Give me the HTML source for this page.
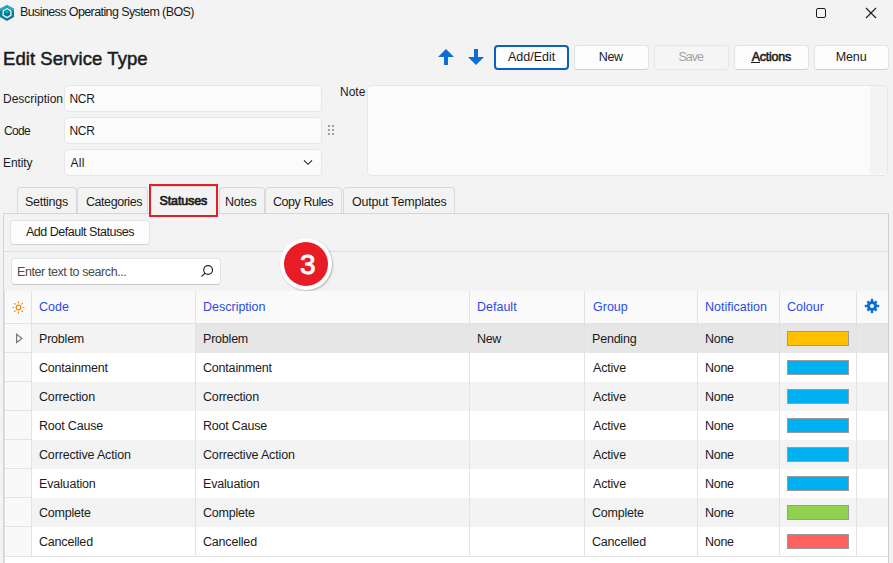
<!DOCTYPE html>
<html><head><meta charset="utf-8"><style>
html,body{margin:0;padding:0;}
body{width:893px;height:563px;overflow:hidden;position:relative;background:#f3f3f3;font-family:"Liberation Sans", sans-serif;}
.t{position:absolute;white-space:nowrap;line-height:1;}
</style></head><body>
<svg style="position:absolute;left:0px;top:4px" width="15" height="18" viewBox="0 0 15 18">
<polygon points="7,0.9 14,4.8 14,12.9 7,16.9 0,12.9 0,4.8" fill="#0b7c98"/>
<polygon points="7,0.9 14,4.8 14,7 7,3.2 0,7 0,4.8" fill="#19b3c3"/>
<polygon points="7,4.6 10.9,6.9 10.9,11.3 7,13.5 3.1,11.3 3.1,6.9" fill="none" stroke="#ffffff" stroke-width="1.2"/>
<polygon points="7,6.6 9.4,8 9.4,10.6 7,12 4.6,10.6 4.6,8" fill="#0a6f8a"/>
<polygon points="7,6.6 9.4,8 7,9.3 4.6,8" fill="#19b3c3"/>
</svg>
<div class="t" style="left:20.00px;top:6px;font-size:12.5px;color:#1a1a1a;font-weight:normal;letter-spacing:-0.600px;">Business Operating System (BOS)</div>
<div style="position:absolute;left:816px;top:8px;width:10px;height:10px;box-sizing:border-box;border:1.2px solid #1c1c1c;border-radius:2px"></div>
<svg style="position:absolute;left:865px;top:7px" width="12" height="12" viewBox="0 0 12 12">
<path d="M1 1 L11 11 M11 1 L1 11" stroke="#1c1c1c" stroke-width="1.1"/></svg>
<div class="t" style="left:3.00px;top:50px;font-size:18.5px;color:#1b1b1b;font-weight:normal;letter-spacing:0.062px;-webkit-text-stroke:0.5px #1b1b1b">Edit Service Type</div>
<svg style="position:absolute;left:438px;top:49px" width="16" height="16" viewBox="0 0 16 16">
<path d="M8 0 L16 8 L10 8 L10 16 L6 16 L6 8 L0 8 Z" fill="#0b6ed4"/></svg>
<svg style="position:absolute;left:468px;top:49px" width="16" height="16" viewBox="0 0 16 16">
<path d="M8 16 L16 8 L10 8 L10 0 L6 0 L6 8 L0 8 Z" fill="#0b6ed4"/></svg>
<div style="position:absolute;left:494px;top:45px;width:75px;height:25px;box-sizing:border-box;background:#fdfdfd;border:2px solid #0b5ec4;border-radius:4px"></div>
<div class="t" style="left:508.00px;top:51px;font-size:12.5px;color:#1b1b1b;font-weight:normal;letter-spacing:0.000px;">Add/Edit</div>
<div style="position:absolute;left:574px;top:45px;width:75px;height:25px;box-sizing:border-box;background:#fdfdfd;border:1px solid #e3e3e3;border-bottom-color:#cfcfcf;border-radius:4px"></div>
<div class="t" style="left:598.85px;top:51px;font-size:12.5px;color:#1b1b1b;font-weight:normal;letter-spacing:-0.350px;">New</div>
<div style="position:absolute;left:654px;top:45px;width:75px;height:25px;box-sizing:border-box;background:#f5f5f5;border:1px solid #e6e6e6;border-radius:4px"></div>
<div class="t" style="left:678.50px;top:51px;font-size:12.5px;color:#a3a3a3;font-weight:normal;letter-spacing:-1.000px;">Save</div>
<div style="position:absolute;left:734px;top:45px;width:75px;height:25px;box-sizing:border-box;background:#fdfdfd;border:1px solid #e3e3e3;border-bottom-color:#cfcfcf;border-radius:4px"></div>
<div class="t" style="left:751.70px;top:51px;font-size:12.5px;color:#1b1b1b;font-weight:normal;letter-spacing:-0.233px;-webkit-text-stroke:0.55px #1b1b1b">Actions</div>
<div style="position:absolute;left:751px;top:62px;width:9px;height:1px;box-sizing:border-box;background:#1b1b1b"></div>
<div style="position:absolute;left:814px;top:45px;width:75px;height:25px;box-sizing:border-box;background:#fdfdfd;border:1px solid #e3e3e3;border-bottom-color:#cfcfcf;border-radius:4px"></div>
<div class="t" style="left:835.65px;top:51px;font-size:12.5px;color:#1b1b1b;font-weight:normal;letter-spacing:-0.100px;">Menu</div>
<div class="t" style="left:3.00px;top:93px;font-size:12px;color:#1b1b1b;font-weight:normal;letter-spacing:0.000px;">Description</div>
<div class="t" style="left:4.00px;top:125px;font-size:12px;color:#1b1b1b;font-weight:normal;letter-spacing:-0.667px;">Code</div>
<div class="t" style="left:3.00px;top:157px;font-size:12px;color:#1b1b1b;font-weight:normal;letter-spacing:-0.100px;">Entity</div>
<div style="position:absolute;left:64px;top:85px;width:258px;height:27px;box-sizing:border-box;background:#fbfbfb;border:1px solid #e6e6e6;border-radius:4px"></div>
<div style="position:absolute;left:64px;top:117px;width:258px;height:27px;box-sizing:border-box;background:#fbfbfb;border:1px solid #e6e6e6;border-radius:4px"></div>
<div style="position:absolute;left:64px;top:149px;width:258px;height:27px;box-sizing:border-box;background:#fbfbfb;border:1px solid #e6e6e6;border-radius:4px"></div>
<div class="t" style="left:69.50px;top:93px;font-size:12px;color:#1b1b1b;font-weight:normal;letter-spacing:-0.350px;">NCR</div>
<div class="t" style="left:69.50px;top:125px;font-size:12px;color:#1b1b1b;font-weight:normal;letter-spacing:-0.350px;">NCR</div>
<div class="t" style="left:70.50px;top:157px;font-size:12px;color:#1b1b1b;font-weight:normal;letter-spacing:0.250px;">All</div>
<svg style="position:absolute;left:302px;top:159px" width="12" height="8" viewBox="0 0 12 8">
<path d="M2 1.3 L6 5.3 L10 1.3" stroke="#222" stroke-width="1.1" fill="none"/></svg>
<div style="position:absolute;left:328px;top:125px;width:2px;height:2px;box-sizing:border-box;background:#a0a0a0"></div>
<div style="position:absolute;left:328px;top:129px;width:2px;height:2px;box-sizing:border-box;background:#a0a0a0"></div>
<div style="position:absolute;left:328px;top:133px;width:2px;height:2px;box-sizing:border-box;background:#a0a0a0"></div>
<div style="position:absolute;left:332px;top:125px;width:2px;height:2px;box-sizing:border-box;background:#a0a0a0"></div>
<div style="position:absolute;left:332px;top:129px;width:2px;height:2px;box-sizing:border-box;background:#a0a0a0"></div>
<div style="position:absolute;left:332px;top:133px;width:2px;height:2px;box-sizing:border-box;background:#a0a0a0"></div>
<div class="t" style="left:340.00px;top:86px;font-size:12px;color:#1b1b1b;font-weight:normal;letter-spacing:0.000px;">Note</div>
<div style="position:absolute;left:367px;top:85px;width:521px;height:91px;box-sizing:border-box;background:#fbfbfb;border:1px solid #e6e6e6;border-radius:4px"></div>
<div style="position:absolute;left:870px;top:86px;width:17px;height:88px;box-sizing:border-box;background:#f3f3f3;border-radius:0 3px 3px 0"></div>
<div style="position:absolute;left:3px;top:213px;width:886px;height:360px;box-sizing:border-box;background:#f3f3f3;border:1px solid #d5d5d5"></div>
<div style="position:absolute;left:17px;top:187px;width:60px;height:26px;box-sizing:border-box;background:#f3f3f3;border:1px solid #d9d9d9;border-bottom:none;border-radius:4px 4px 0 0"></div>
<div class="t" style="left:25.00px;top:196px;font-size:12.5px;color:#1b1b1b;font-weight:normal;letter-spacing:-0.286px;">Settings</div>
<div style="position:absolute;left:77px;top:187px;width:71px;height:26px;box-sizing:border-box;background:#f3f3f3;border:1px solid #d9d9d9;border-bottom:none;border-radius:4px 4px 0 0"></div>
<div class="t" style="left:86.00px;top:196px;font-size:12.5px;color:#1b1b1b;font-weight:normal;letter-spacing:-0.444px;">Categories</div>
<div style="position:absolute;left:150px;top:186px;width:68px;height:28px;box-sizing:border-box;background:#f3f3f3;border:1px solid #d9d9d9;border-bottom:none;border-radius:4px 4px 0 0"></div>
<div class="t" style="left:159.50px;top:195px;font-size:12.5px;color:#1b1b1b;font-weight:normal;letter-spacing:-0.114px;-webkit-text-stroke:0.7px #1b1b1b">Statuses</div>
<div style="position:absolute;left:219px;top:187px;width:46px;height:26px;box-sizing:border-box;background:#f3f3f3;border:1px solid #d9d9d9;border-bottom:none;border-radius:4px 4px 0 0"></div>
<div class="t" style="left:225.00px;top:196px;font-size:12.5px;color:#1b1b1b;font-weight:normal;letter-spacing:-0.250px;">Notes</div>
<div style="position:absolute;left:265px;top:187px;width:77px;height:26px;box-sizing:border-box;background:#f3f3f3;border:1px solid #d9d9d9;border-bottom:none;border-radius:4px 4px 0 0"></div>
<div class="t" style="left:273.00px;top:196px;font-size:12.5px;color:#1b1b1b;font-weight:normal;letter-spacing:-0.444px;">Copy Rules</div>
<div style="position:absolute;left:343px;top:187px;width:112px;height:26px;box-sizing:border-box;background:#f3f3f3;border:1px solid #d9d9d9;border-bottom:none;border-radius:4px 4px 0 0"></div>
<div class="t" style="left:352.00px;top:196px;font-size:12.5px;color:#1b1b1b;font-weight:normal;letter-spacing:-0.200px;">Output Templates</div>
<div style="position:absolute;left:149px;top:184px;width:69px;height:33px;box-sizing:border-box;border:2px solid #e0202a"></div>
<div style="position:absolute;left:10px;top:220px;width:140px;height:25px;box-sizing:border-box;background:#fdfdfd;border:1px solid #e3e3e3;border-bottom-color:#cfcfcf;border-radius:4px"></div>
<div class="t" style="left:26.00px;top:226px;font-size:12.5px;color:#1b1b1b;font-weight:normal;letter-spacing:-0.474px;">Add Default Statuses</div>
<div style="position:absolute;left:4px;top:251px;width:884px;height:1px;box-sizing:border-box;background:#dedede"></div>
<div style="position:absolute;left:11px;top:258px;width:210px;height:27px;box-sizing:border-box;background:#ffffff;border:1px solid #e3e3e3;border-bottom-color:#c8c8c8;border-radius:4px"></div>
<div class="t" style="left:17.00px;top:266px;font-size:12.5px;color:#4a4a4a;font-weight:normal;letter-spacing:-0.409px;">Enter text to search...</div>
<svg style="position:absolute;left:200px;top:264px" width="15" height="15" viewBox="0 0 15 15">
<circle cx="8.1" cy="6.0" r="4.4" stroke="#222" stroke-width="1.15" fill="none"/>
<path d="M5.0 9.1 L1.4 12.7" stroke="#222" stroke-width="1.2"/></svg>
<div style="position:absolute;left:280px;top:238px;width:52px;height:52px;border-radius:50%;background:#fff;box-shadow:1px 1px 2px rgba(0,0,0,0.25)"></div>
<div style="position:absolute;left:284px;top:242px;width:44px;height:44px;border-radius:50%;background:#e81c24"></div>
<div class="t" style="left:300.00px;top:251px;font-size:28px;color:#ffffff;font-weight:normal;letter-spacing:0.000px;-webkit-text-stroke:0.9px #ffffff">3</div>
<div style="position:absolute;left:4px;top:291px;width:884px;height:32px;box-sizing:border-box;background:#fafafa"></div>
<div style="position:absolute;left:31px;top:324px;width:857px;height:29px;box-sizing:border-box;background:#f3f3f3"></div>
<div style="position:absolute;left:195px;top:324px;width:693px;height:29px;box-sizing:border-box;background:#e6e6e6"></div>
<div style="position:absolute;left:31px;top:353px;width:857px;height:29px;box-sizing:border-box;background:#ffffff"></div>
<div style="position:absolute;left:31px;top:382px;width:857px;height:29px;box-sizing:border-box;background:#f3f3f3"></div>
<div style="position:absolute;left:31px;top:411px;width:857px;height:29px;box-sizing:border-box;background:#ffffff"></div>
<div style="position:absolute;left:31px;top:440px;width:857px;height:29px;box-sizing:border-box;background:#f3f3f3"></div>
<div style="position:absolute;left:31px;top:469px;width:857px;height:29px;box-sizing:border-box;background:#ffffff"></div>
<div style="position:absolute;left:31px;top:498px;width:857px;height:29px;box-sizing:border-box;background:#f3f3f3"></div>
<div style="position:absolute;left:31px;top:527px;width:857px;height:29px;box-sizing:border-box;background:#ffffff"></div>
<div style="position:absolute;left:4px;top:323px;width:27px;height:234px;box-sizing:border-box;background:#f9f9f9"></div>
<div style="position:absolute;left:4px;top:557px;width:884px;height:10px;box-sizing:border-box;background:#ffffff"></div>
<div style="position:absolute;left:31px;top:291px;width:1px;height:266px;box-sizing:border-box;background:#e3e3e3"></div>
<div style="position:absolute;left:195px;top:291px;width:1px;height:266px;box-sizing:border-box;background:#e3e3e3"></div>
<div style="position:absolute;left:469px;top:291px;width:1px;height:266px;box-sizing:border-box;background:#e3e3e3"></div>
<div style="position:absolute;left:584px;top:291px;width:1px;height:266px;box-sizing:border-box;background:#e3e3e3"></div>
<div style="position:absolute;left:697px;top:291px;width:1px;height:266px;box-sizing:border-box;background:#e3e3e3"></div>
<div style="position:absolute;left:779px;top:291px;width:1px;height:266px;box-sizing:border-box;background:#e3e3e3"></div>
<div style="position:absolute;left:856px;top:291px;width:1px;height:266px;box-sizing:border-box;background:#e3e3e3"></div>
<div style="position:absolute;left:4px;top:323px;width:884px;height:1px;box-sizing:border-box;background:#e3e3e3"></div>
<div style="position:absolute;left:4px;top:352px;width:27px;height:1px;box-sizing:border-box;background:#e3e3e3"></div>
<div style="position:absolute;left:4px;top:381px;width:27px;height:1px;box-sizing:border-box;background:#e3e3e3"></div>
<div style="position:absolute;left:4px;top:410px;width:27px;height:1px;box-sizing:border-box;background:#e3e3e3"></div>
<div style="position:absolute;left:4px;top:439px;width:27px;height:1px;box-sizing:border-box;background:#e3e3e3"></div>
<div style="position:absolute;left:4px;top:468px;width:27px;height:1px;box-sizing:border-box;background:#e3e3e3"></div>
<div style="position:absolute;left:4px;top:497px;width:27px;height:1px;box-sizing:border-box;background:#e3e3e3"></div>
<div style="position:absolute;left:4px;top:526px;width:27px;height:1px;box-sizing:border-box;background:#e3e3e3"></div>
<div style="position:absolute;left:4px;top:556px;width:884px;height:1px;box-sizing:border-box;background:#e3e3e3"></div>
<div style="position:absolute;left:4px;top:291px;width:1px;height:272px;box-sizing:border-box;background:#dedede"></div>
<div style="position:absolute;left:888px;top:213px;width:1px;height:350px;box-sizing:border-box;background:#cfcfcf"></div>
<div class="t" style="left:39.00px;top:301px;font-size:12.5px;color:#2a4ce4;font-weight:normal;letter-spacing:0.000px;">Code</div>
<div class="t" style="left:203.00px;top:301px;font-size:12.5px;color:#2a4ce4;font-weight:normal;letter-spacing:0.000px;">Description</div>
<div class="t" style="left:477.00px;top:301px;font-size:12.5px;color:#2a4ce4;font-weight:normal;letter-spacing:0.000px;">Default</div>
<div class="t" style="left:593.00px;top:301px;font-size:12.5px;color:#2a4ce4;font-weight:normal;letter-spacing:0.000px;">Group</div>
<div class="t" style="left:705.00px;top:301px;font-size:12.5px;color:#2a4ce4;font-weight:normal;letter-spacing:0.000px;">Notification</div>
<div class="t" style="left:787.00px;top:301px;font-size:12.5px;color:#2a4ce4;font-weight:normal;letter-spacing:0.000px;">Colour</div>
<svg style="position:absolute;left:11px;top:300px" width="15" height="15" viewBox="0 0 15 15">
<circle cx="7.5" cy="7.5" r="2.3" stroke="#ff8a00" stroke-width="1.25" fill="none"/>
<g stroke="#ff8a00" stroke-width="1.15" stroke-linecap="round">
<path d="M7.5 1.9 V2.9 M7.5 12.1 V13.1 M1.9 7.5 H2.9 M12.1 7.5 H13.1 M3.5 3.5 L4.2 4.2 M10.8 10.8 L11.5 11.5 M11.5 3.5 L10.8 4.2 M4.2 10.8 L3.5 11.5"/></g></svg>
<svg style="position:absolute;left:864px;top:298px" width="16" height="16" viewBox="0 0 16 16">
<g fill="#0a6ed6" transform="translate(8,8)">
<circle r="5"/>
<rect x="-1.2" y="-7.2" width="2.4" height="14.4"/>
<rect x="-1.2" y="-6.6" width="2.4" height="13.2" transform="rotate(45)"/>
<rect x="-1.2" y="-7.2" width="2.4" height="14.4" transform="rotate(90)"/>
<rect x="-1.2" y="-6.6" width="2.4" height="13.2" transform="rotate(135)"/>
</g><circle cx="8" cy="8" r="2" fill="#fafafa"/></svg>
<div class="t" style="left:39.00px;top:333px;font-size:12.5px;color:#1b1b1b;font-weight:normal;letter-spacing:-0.210px;">Problem</div>
<div class="t" style="left:203.00px;top:333px;font-size:12.5px;color:#1b1b1b;font-weight:normal;letter-spacing:-0.210px;">Problem</div>
<div class="t" style="left:477.00px;top:333px;font-size:12.5px;color:#1b1b1b;font-weight:normal;letter-spacing:-0.336px;">New</div>
<div class="t" style="left:592.00px;top:333px;font-size:12.5px;color:#1b1b1b;font-weight:normal;letter-spacing:-0.205px;">Pending</div>
<div class="t" style="left:705.00px;top:333px;font-size:12.5px;color:#1b1b1b;font-weight:normal;letter-spacing:-0.271px;">None</div>
<div style="position:absolute;left:787px;top:331px;width:62px;height:15px;box-sizing:border-box;background:#ffc000;border:1px solid #9a9a9a"></div>
<svg style="position:absolute;left:15px;top:333px" width="9" height="11" viewBox="0 0 9 11">
<path d="M1.6 1.3 L6.9 5.4 L1.6 9.5 Z" stroke="#777" stroke-width="1.2" fill="none" stroke-linejoin="miter"/></svg>
<div class="t" style="left:39.00px;top:362px;font-size:12.5px;color:#1b1b1b;font-weight:normal;letter-spacing:-0.196px;">Containment</div>
<div class="t" style="left:203.00px;top:362px;font-size:12.5px;color:#1b1b1b;font-weight:normal;letter-spacing:-0.196px;">Containment</div>
<div class="t" style="left:593.00px;top:362px;font-size:12.5px;color:#1b1b1b;font-weight:normal;letter-spacing:-0.190px;">Active</div>
<div class="t" style="left:705.00px;top:362px;font-size:12.5px;color:#1b1b1b;font-weight:normal;letter-spacing:-0.271px;">None</div>
<div style="position:absolute;left:787px;top:360px;width:62px;height:15px;box-sizing:border-box;background:#00b0f0;border:1px solid #9a9a9a"></div>
<div class="t" style="left:39.00px;top:391px;font-size:12.5px;color:#1b1b1b;font-weight:normal;letter-spacing:-0.174px;">Correction</div>
<div class="t" style="left:203.00px;top:391px;font-size:12.5px;color:#1b1b1b;font-weight:normal;letter-spacing:-0.174px;">Correction</div>
<div class="t" style="left:593.00px;top:391px;font-size:12.5px;color:#1b1b1b;font-weight:normal;letter-spacing:-0.190px;">Active</div>
<div class="t" style="left:705.00px;top:391px;font-size:12.5px;color:#1b1b1b;font-weight:normal;letter-spacing:-0.271px;">None</div>
<div style="position:absolute;left:787px;top:389px;width:62px;height:15px;box-sizing:border-box;background:#00b0f0;border:1px solid #9a9a9a"></div>
<div class="t" style="left:39.00px;top:420px;font-size:12.5px;color:#1b1b1b;font-weight:normal;letter-spacing:-0.202px;">Root Cause</div>
<div class="t" style="left:203.00px;top:420px;font-size:12.5px;color:#1b1b1b;font-weight:normal;letter-spacing:-0.202px;">Root Cause</div>
<div class="t" style="left:593.00px;top:420px;font-size:12.5px;color:#1b1b1b;font-weight:normal;letter-spacing:-0.190px;">Active</div>
<div class="t" style="left:705.00px;top:420px;font-size:12.5px;color:#1b1b1b;font-weight:normal;letter-spacing:-0.271px;">None</div>
<div style="position:absolute;left:787px;top:418px;width:62px;height:15px;box-sizing:border-box;background:#00b0f0;border:1px solid #9a9a9a"></div>
<div class="t" style="left:39.00px;top:449px;font-size:12.5px;color:#1b1b1b;font-weight:normal;letter-spacing:-0.163px;">Corrective Action</div>
<div class="t" style="left:203.00px;top:449px;font-size:12.5px;color:#1b1b1b;font-weight:normal;letter-spacing:-0.163px;">Corrective Action</div>
<div class="t" style="left:593.00px;top:449px;font-size:12.5px;color:#1b1b1b;font-weight:normal;letter-spacing:-0.190px;">Active</div>
<div class="t" style="left:705.00px;top:449px;font-size:12.5px;color:#1b1b1b;font-weight:normal;letter-spacing:-0.271px;">None</div>
<div style="position:absolute;left:787px;top:447px;width:62px;height:15px;box-sizing:border-box;background:#00b0f0;border:1px solid #9a9a9a"></div>
<div class="t" style="left:39.00px;top:478px;font-size:12.5px;color:#1b1b1b;font-weight:normal;letter-spacing:-0.177px;">Evaluation</div>
<div class="t" style="left:203.00px;top:478px;font-size:12.5px;color:#1b1b1b;font-weight:normal;letter-spacing:-0.177px;">Evaluation</div>
<div class="t" style="left:593.00px;top:478px;font-size:12.5px;color:#1b1b1b;font-weight:normal;letter-spacing:-0.190px;">Active</div>
<div class="t" style="left:705.00px;top:478px;font-size:12.5px;color:#1b1b1b;font-weight:normal;letter-spacing:-0.271px;">None</div>
<div style="position:absolute;left:787px;top:476px;width:62px;height:15px;box-sizing:border-box;background:#00b0f0;border:1px solid #9a9a9a"></div>
<div class="t" style="left:39.00px;top:507px;font-size:12.5px;color:#1b1b1b;font-weight:normal;letter-spacing:-0.208px;">Complete</div>
<div class="t" style="left:203.00px;top:507px;font-size:12.5px;color:#1b1b1b;font-weight:normal;letter-spacing:-0.208px;">Complete</div>
<div class="t" style="left:592.00px;top:507px;font-size:12.5px;color:#1b1b1b;font-weight:normal;letter-spacing:-0.208px;">Complete</div>
<div class="t" style="left:705.00px;top:507px;font-size:12.5px;color:#1b1b1b;font-weight:normal;letter-spacing:-0.271px;">None</div>
<div style="position:absolute;left:787px;top:505px;width:62px;height:15px;box-sizing:border-box;background:#92d050;border:1px solid #9a9a9a"></div>
<div class="t" style="left:39.00px;top:536px;font-size:12.5px;color:#1b1b1b;font-weight:normal;letter-spacing:-0.189px;">Cancelled</div>
<div class="t" style="left:203.00px;top:536px;font-size:12.5px;color:#1b1b1b;font-weight:normal;letter-spacing:-0.189px;">Cancelled</div>
<div class="t" style="left:592.00px;top:536px;font-size:12.5px;color:#1b1b1b;font-weight:normal;letter-spacing:-0.189px;">Cancelled</div>
<div class="t" style="left:705.00px;top:536px;font-size:12.5px;color:#1b1b1b;font-weight:normal;letter-spacing:-0.271px;">None</div>
<div style="position:absolute;left:787px;top:534px;width:62px;height:15px;box-sizing:border-box;background:#ff6161;border:1px solid #9a9a9a"></div>
</body></html>
